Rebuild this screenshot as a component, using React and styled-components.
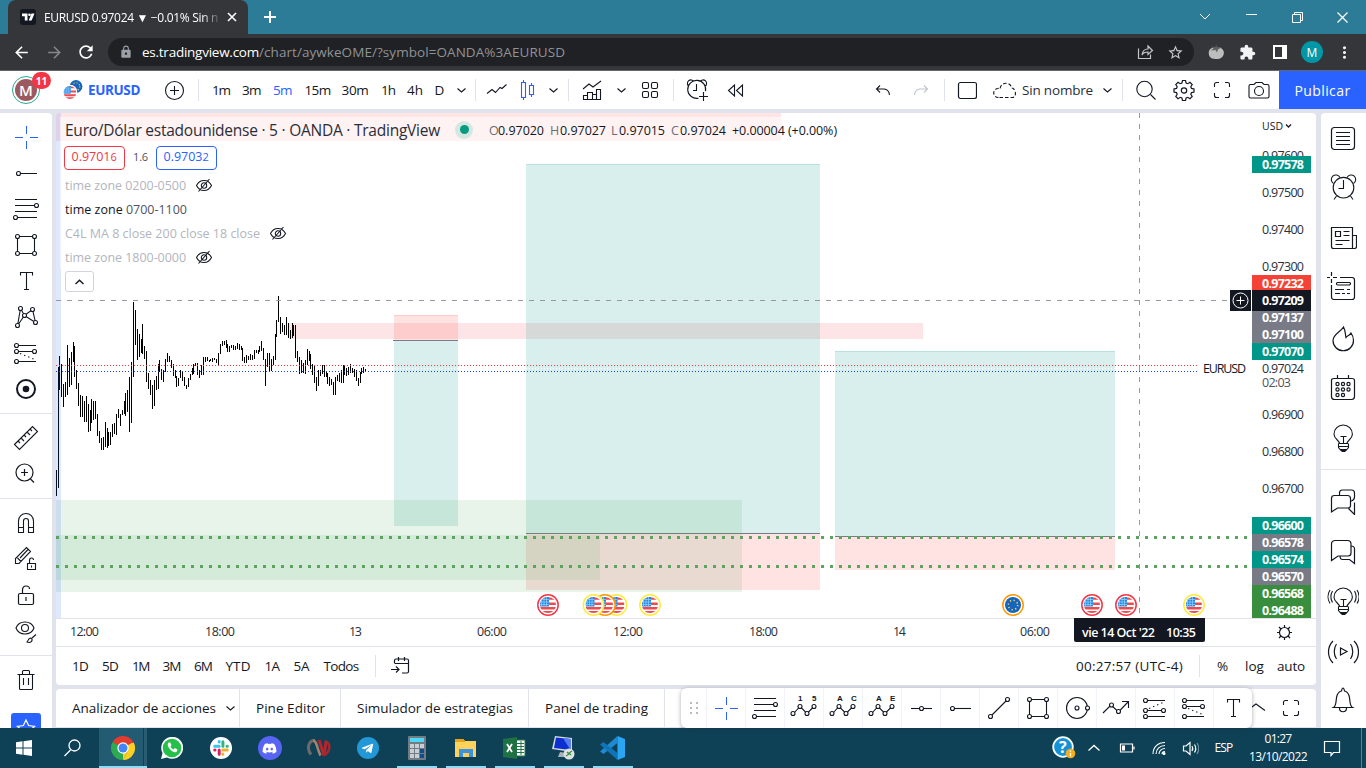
import React, { useLayoutEffect, useRef } from "react";
import styled, { createGlobalStyle } from "styled-components";
import { MdArrowBack, MdArrowForward, MdRefresh, MdLock, MdStarBorder, MdExtension, MdMoreVert } from "react-icons/md";
import { FaDiscord, FaTelegramPlane } from "react-icons/fa";

const UI = `"Trebuchet MS", "Open Sans", "Noto Sans", sans-serif`;
const INK = "#131722";
const BLUE = "#2962ff";
const LINE = "#e0e3eb";

const Global = createGlobalStyle`
  * { box-sizing: border-box; }
  body { margin: 0; overflow: hidden; font-family: ${UI}; color: ${INK}; }
  svg { display: block; flex: none; }
`;

/* ---------- text fitted to a width through its tracking ---------- */
const FitText = styled.span`
  display: inline-block;
  white-space: pre;
  flex: none;
  font-size: ${(p) => p.$size || 14}px;
  font-weight: ${(p) => p.$weight || 400};
  color: ${(p) => p.$color || INK};
  line-height: 1.3;
  padding-top: ${(p) => p.$drop}px;
`;
function Fit({ w, size, weight, color, drop = 2, children }) {
  const ref = useRef(null);
  useLayoutEffect(() => {
    const el = ref.current;
    el.style.letterSpacing = "0px";
    const natural = el.getBoundingClientRect().width;
    el.style.letterSpacing = `${(w - natural) / el.textContent.length}px`;
  }, [w, children]);
  return <FitText ref={ref} $size={size} $weight={weight} $color={color} $drop={drop}>{children}</FitText>;
}

/* ---------- page frame ---------- */
const Screen = styled.div`
  width: 1366px; height: 768px; overflow: hidden;
  display: flex; flex-direction: column; background: ${LINE};
`;
const Cell = styled.div`
  width: ${(p) => p.$w}px; height: 100%; flex: none;
  display: flex; align-items: center; justify-content: ${(p) => p.$align || "center"};
  padding-left: ${(p) => p.$pl || 0}px;
`;
const Grow = styled.div`flex: 1;`;

/* ---------- browser ---------- */
const TabStrip = styled.div`
  height: 34px; flex: none; background: #2c7b97; display: flex; align-items: stretch; padding-left: 8px;
`;
const Tab = styled.div`
  width: 240px; background: #35363a; border-radius: 8px 8px 0 0; display: flex; align-items: center;
  padding-left: 12px; gap: 8px;
`;
const TabTitle = styled.div`
  width: 174px; color: #fff; white-space: nowrap; padding-bottom: 2px;
  mask-image: linear-gradient(90deg, #000 158px, transparent 178px);
`;
const NavBar = styled.div`
  height: 37px; flex: none; background: #35363a; border-bottom: 1px solid #66656b;
  display: flex; align-items: center;
`;
const Omnibox = styled.div`
  width: 1086px; height: 28px; border-radius: 14px; background: #202124; display: flex; align-items: center;
  padding: 0 10px;
`;
const Profile = styled.div`
  width: 22px; height: 22px; border-radius: 50%; background: #0097a7; color: #fff; font-size: 12px;
  display: flex; align-items: center; justify-content: center;
`;

/* ---------- trading header ---------- */
const Header = styled.div`
  height: 38px; flex: none; background: #fff; display: flex; align-items: center;
`;
const VLine = styled.div`width: 1px; height: 22px; background: ${LINE}; flex: none;`;
const Avatar = styled.div`
  position: relative; width: 28px; height: 28px; border-radius: 50%; border: 1px solid #22ab94; padding: 2px;
`;
const AvatarFace = styled.div`
  width: 22px; height: 22px; border-radius: 50%; background: #9c5a60; color: #fff; font-size: 15px; font-weight: 600;
  display: flex; align-items: center; justify-content: center;
`;
const Badge = styled.div`
  position: absolute; left: 19px; top: -5px; width: 19px; height: 17px; border-radius: 9px; background: #f23645; color: #fff;
  font-size: 10px; font-weight: 700; display: flex; align-items: center; justify-content: center;
`;
const Publish = styled.div`
  width: 87px; height: 38px; background: ${BLUE}; display: flex; align-items: center; justify-content: center;
`;

/* ---------- workspace ---------- */
const Work = styled.div`height: 615px; flex: none; margin-top: 4px; display: flex;`;
const LeftBar = styled.div`
  width: 52px; background: #fff; border-radius: 0 4px 0 0; padding-top: 6px; overflow: hidden;
  display: flex; flex-direction: column; align-items: center;
`;
const Tool = styled.div`width: 52px; height: 36px; flex: none; display: flex; align-items: center; justify-content: center;`;
const HLine = styled.div`width: 100%; height: 1px; background: ${LINE}; margin: 6px 0; flex: none;`;
const StarButton = styled.div`
  width: 30px; height: 30px; margin-top: 15px; border-radius: 3px; background: ${BLUE}; flex: none;
  display: flex; align-items: center; justify-content: center;
`;
const Middle = styled.div`width: 1260px; margin-left: 4px; display: flex; flex-direction: column;`;
const ChartCard = styled.div`
  position: relative; height: 572px; background: #fff; border-radius: 4px; overflow: hidden;
  display: flex; flex-direction: column;
`;
const RangeBar = styled.div`
  height: 39px; border-top: 1px solid ${LINE}; display: flex; align-items: center; margin-top: -1px; flex: none;
`;
const BottomTabs = styled.div`
  position: relative; height: 39px; margin-top: 4px; background: #fff; border-radius: 4px 4px 0 0;
  border-bottom: 1px solid ${LINE}; display: flex; align-items: center;
`;
const BottomTab = styled.div`
  width: ${(p) => p.$w}px; height: 38px; border-right: 1px solid ${LINE}; display: flex; align-items: center;
  padding-left: 16px; gap: 9px;
`;
const Favorites = styled.div`
  position: absolute; left: 625px; top: -1px; width: 571px; height: 40px; background: #fff; border-radius: 6px;
  box-shadow: 0 1px 4px rgba(40, 44, 60, 0.4); display: flex;
`;
const FavCell = styled.div`
  width: ${(p) => p.$w || 39}px; height: 40px; display: flex; align-items: center; justify-content: center;
  border-left: ${(p) => (p.$first ? 0 : 1)}px solid #f0f3fa;
`;
const RightBar = styled.div`
  width: 45px; margin-left: 5px; background: #fff; border-radius: 4px 0 0 0; display: flex; flex-direction: column; align-items: center;
`;
const SideTool = styled.div`
  width: 45px; height: 50px; flex: none; padding-right: 1px; display: flex; align-items: center; justify-content: center;
`;

/* ---------- legend over the chart ---------- */
const Legend = styled.div`
  position: absolute; left: 4px; top: 4px; display: flex; flex-direction: column; align-items: flex-start;
`;
const LegendRow = styled.div`
  height: ${(p) => p.$h || 24}px; padding: 0 6px 0 5px; display: flex; align-items: center; gap: ${(p) => p.$gap || 0}px;
  background: rgba(255, 255, 255, 0.5);
`;
const Quote = styled.div`
  width: 61px; height: 24px; border: 1px solid ${(p) => p.$c}; border-radius: 4px; background: #fff; color: ${(p) => p.$c};
  display: flex; align-items: center; justify-content: center; margin-left: ${(p) => p.$ml || 0}px;
  margin-right: ${(p) => p.$mr || 0}px;
`;
const Pip = styled.span`display: inline-flex; padding-bottom: 3px;`;
const Collapse = styled.div`
  width: 29px; height: 21px; margin: 2px 0 0 5px; border: 1px solid #d1d4dc; border-radius: 3px; background: #fff;
  display: flex; align-items: center; justify-content: center;
`;
const Status = styled.div`
  width: 18px; height: 18px; border-radius: 50%; background: #d3e8e2; display: flex; align-items: center; justify-content: center;
  margin: 0 16px 0 15px;
  &::after { content: ""; width: 9px; height: 9px; border-radius: 50%; background: #089981; }
`;

/* ---------- taskbar ---------- */
const Taskbar = styled.div`height: 40px; flex: none; background: #0e4156; display: flex; align-items: center;`;
const TaskApp = styled.div`
  width: 49px; height: 40px; flex: none; display: flex; align-items: center; justify-content: center;
  background: ${(p) => (p.$active ? "linear-gradient(90deg,#0e4156 1px,#225b72 1px,#225b72 45px,#0e4156 45px,#0e4156 46px,#2a5b70 46px)" : "none")};
  position: relative;
  &::after {
    content: ""; position: absolute; left: ${(p) => (p.$active ? 1 : 5)}px; right: ${(p) => (p.$active ? 0 : 4)}px; bottom: 0;
    height: ${(p) => (p.$open ? 2 : 0)}px; background: #8cdcf5;
  }
`;
const Clock = styled.div`
  width: 76px; display: flex; flex-direction: column; align-items: center; gap: 2px;
`;
const EdgeLine = styled.div`width: 1px; height: 40px; background: #5b7f8e; margin-right: 4px;`;

/* ---------- icons ---------- */
function Ico({ d, dots = [], s = 28, c = INK, sw = 1, fill = "none", children }) {
  return (
    <svg width={s} height={s} viewBox={`0 0 ${s} ${s}`} fill={fill} stroke={c} strokeWidth={sw}>
      {d && <path d={d} />}
      {dots.map(([x, y], i) => <circle key={i} cx={x} cy={y} r="2" fill="#fff" strokeWidth="1.1" />)}
      {children}
    </svg>
  );
}
const Chevron = ({ up }) => (
  <svg width="11" height="8" viewBox="0 0 11 8" fill="none" stroke={INK} strokeWidth={up ? 1.4 : 1.1}>
    <path d={up ? "M1.5 6L5.5 2.2 9.5 6" : "M1.5 2.5L5.5 6 9.5 2.5"} />
  </svg>
);
const Cross = () => <Ico c={BLUE} d="M14.5 3v8M14.5 18v8M3 14.5h8M18 14.5h8" />;
const Ray = () => <Ico d="M9 14.5h16" sw={1.1} dots={[[6.5, 14.5]]} />;
const Fib = () => <Ico d="M3 4.5h22M3 10.5h20M3 16.5h22M5 22.5h20" sw={1.1} dots={[[24.5, 10.5], [3.5, 22.5]]} />;
const RectI = () => <Ico d="M5.5 5.5h17v17h-17z" sw={1.1} dots={[[5.5, 5.5], [22.5, 5.5], [5.5, 22.5], [22.5, 22.5]]} />;
const TextI = () => <Ico d="M8.500 8.500V5.500h12v3M14.500 5.500v17M12 22.500h5" sw={1.1} />;
const Pattern = () => <Ico d="M5.500 22.500L8.500 5.500l4 7 8-6 3 13-11-7z" sw={1.1} dots={[[5.5, 22.5], [8.5, 5.5], [12.5, 12.5], [20.5, 6.5], [23.5, 19.5]]} />;
const Forecast = ({ flip }) =>
  flip ? (
    <Ico d="M5 6.500h19M5 16.500h17M5 22.500h19" sw={1.1} dots={[[4.5, 6.5], [4.5, 16.5], [22.5, 16.5], [4.5, 22.5]]}>
      <path d="M8 14.500L22 8.500" strokeDasharray="1.4 3" />
    </Ico>
  ) : (
    <Ico d="M5 6.500h19M5 12.500h17M5 22.500h19" sw={1.1} dots={[[4.5, 6.5], [4.5, 12.5], [22.5, 12.5], [4.5, 22.5]]}>
      <path d="M8 14.500L24 21" strokeDasharray="1.4 3" />
    </Ico>
  );
const Bulb = ({ waves }) => (
  <Ico s={32} sw={1.1} d="M12.500 21.500c0-3-5.500-4.500-5.500-9.300a9.200 9.200 0 0 1 18.400 0c0 4.800-5.400 6.300-5.400 9.300M11.500 21.500h9.500M11.500 24.500h9.500M13 27.500h7M14.500 29.500h4M16.500 21v-7M13.500 14.500h6M11.500 21.500v4l2.500 3h5l2.500-3v-4">
    {waves && <path d="M5.500 6c-2 3.500-2 8 0 11.500M3 5c-2.600 4-2.600 9.500 0 13.500M27.500 6c2 3.500 2 8 0 11.500M30 5c2.600 4 2.600 9.500 0 13.500" />}
  </Ico>
);
const HiddenEye = () => (
  <Ico s={18} sw={1.05} d="M1.500 9.500C3 6.500 6 4.500 9 4.500s6 2 7.500 5c-1.500 3-4.500 5-7.500 5s-6-2-7.500-5zM3.500 15.500L14.500 3">
    <circle cx="9" cy="9.500" r="2.700" />
  </Ico>
);
const Wave = ({ a, b }) => (
  <Ico s={28} sw={1.1} d="M3.500 19.500L10 12.500l7 7 7-7" dots={[[3, 19.5], [10, 12.5], [17, 19.5], [24, 12.5]]}>
    <g fill={INK} stroke="none" fontFamily="Liberation Sans, sans-serif" fontSize="8" fontWeight="700">
      <text x="8" y="7">{a}</text><text x="22" y="7">{b}</text>
    </g>
  </Ico>
);
const Corners = () => <Ico sw={1.1} d="M6.500 11V8.500q0-2 2-2H11M17 6.500h2.500q2 0 2 2V11M21.500 17v2.500q0 2-2 2H17M11 21.500H8.500q-2 0-2-2V17" />;
const AlarmClock = () => (
  <Ico s={32} sw={1.1} d="M16.500 8v8.500h-5M6.500 11.500a4.600 4.600 0 1 1 6.500-6M20 5.500a4.600 4.600 0 1 1 6.500 6M9.500 24L7 27.500M23.500 24l2.500 3.500">
    <circle cx="16.500" cy="15.700" r="10.300" />
  </Ico>
);
const AlarmAdd = () => (
  <Ico s={24} sw={1.1} d="M11.500 6v6.500H8M4 8.500a3.600 3.600 0 1 1 5-5M15 3.500a3.600 3.600 0 1 1 5 5M18.500 14v9M14 18.500h9M13.500 20.200a9 9 0 1 1 7-7" />
);

/* circular US / EU marks; `ring` gives the importance colour */
function FlagShape({ eu }) {
  if (eu)
    return (
      <g>
        <circle r="8" fill="#1565c0" />
        <circle r="4.700" fill="none" stroke="#ffd54f" strokeWidth="1.500" strokeDasharray="1.300 2.390" />
      </g>
    );
  return (
    <g clipPath="url(#disc)">
      <rect x="-8" y="-8" width="16" height="16" fill="#fff" />
      <path d="M-8-6.500H8M-8-1.200H8M-8 3.300H8M-8 7.300H8" stroke="#ef4b4f" strokeWidth="2.500" />
      <rect x="-8" y="-8" width="9" height="9.500" fill="#1e88e5" />
      <path d="M-6.500-8V1M-4-8V1M-1.500-8V1M-8-5.500H1M-8-3H1M-8-.500H1" stroke="#9fd0f8" strokeWidth=".7" />
    </g>
  );
}
const EventMark = ({ x, ring, eu }) => (
  <g transform={`translate(${x} 492)`}>
    <circle r="10.200" fill="#fff" stroke={ring} strokeWidth="1.500" />
    <FlagShape eu={eu} />
  </g>
);

/* ---------- chart ---------- */
const BARS_A = "169,540,618 175,232,594 179,197,300 185,222,320 191,282,350 197,275,320 203,165,315 209,205,292 215,186,285 220,156,215 223,168,262 230,240,296 236,280,350 242,315,380 248,318,380 254,332,395 260,318,395 266,342,426 272,360,423 275,327,400 281,333,390 287,333,387 293,372,437 299,423,458 305,444,480 311,440,480 317,396,470 323,414,474 326,426,468 332,426,464 338,402,440 344,398,432 350,372,434 356,357,385 362,372,407 368,360,375 374,332,372 377,309,378 383,300,365 389,261,426 395,216,398 401,36,261 407,60,165 413,116,210 419,131,200 425,147,190 428,102,192 434,168,207 440,182,276 446,248,297 452,270,315 458,285,356 464,270,348 470,258,300 476,222,297 479,210,245 485,237,270 491,240,275 497,207,246 503,189,216 509,198,216 515,210,234 521,222,258 527,240,264 530,258,290 536,264,288 542,240,264 548,246,273 554,261,288 560,285,297 566,264,290 572,252,270 578,234,255 581,222,252 587,219,228 593,219,255 599,240,263 605,225,255 611,201,255 617,201,216 623,201,213 629,210,216 632,207,213 638,204,216 644,204,210 650,207,219 656,189,225 662,162,192 668,153,168 674,153,165 680,150,174 683,162,186 689,168,186";
const BARS_B = "4,195,204 10,195,210 16,198,210 22,189,207 28,192,210 34,198,210 37,204,243 43,231,249 49,225,249 55,228,240 61,222,240 67,225,240 73,210,237 79,210,219 85,210,222 88,198,216 94,183,213 100,204,240 106,237,318 112,219,261 118,219,273 124,237,273 130,228,255 136,162,240 139,120,171 145,48,126 151,111,162 157,129,156 163,135,165 169,111,165 175,129,174 181,150,177 187,129,174 190,135,168 196,135,234 202,213,246 208,231,282 214,240,279 220,249,279 226,240,282 232,207,255 238,213,243 241,222,267 247,252,285 253,258,309 259,291,333 265,270,318 271,270,288 277,255,282 283,255,291 289,276,291 292,279,312 298,291,318 304,297,315 310,306,345 316,291,345 322,285,303 328,279,306 334,270,309 340,255,309 343,258,285 349,264,288 355,261,285 361,252,279 367,264,279 373,267,291 379,270,303 385,294,318 391,276,309 394,264,282 400,261,279 406,267,273";
const toBars = (src, ox, oy) =>
  src.split(" ").map((t) => {
    const [x, a, b] = t.split(",").map(Number);
    return [Math.floor(x / 3) + ox, Math.round(a / 3) + oy, Math.round((b - a) / 3)];
  });
const BARS = [...toBars(BARS_A, -56, 177), ...toBars(BARS_B, 174, 167)];

const TEAL = "rgba(0,150,136,.15)";
const RED = "rgba(255,60,60,.15)";
const PRICES = [["0.97600", 43], ["0.97500", 80], ["0.97400", 117], ["0.97300", 154], ["0.97024", 256], ["0.96900", 302], ["0.96800", 339], ["0.96700", 376]];
const TAGS = [
  ["0.97578", 43, "#009688"], ["0.97232", 162, "#f44336"], ["0.97137", 196, "#787b86"], ["0.97100", 213, "#787b86"], ["0.97070", 230, "#009688"],
  ["0.97209", 179, INK], ["0.96600", 404, "#009688"], ["0.96578", 421, "#787b86"], ["0.96574", 438, "#009688"],
  ["0.96570", 455, "#787b86"], ["0.96568", 472, "#388e3c"], ["0.96488", 489, "#388e3c"],
];
const TIMES = [["12:00", 14, 29], ["18:00", 149, 30], ["13", 293, 13], ["06:00", 421, 30], ["12:00", 557, 30], ["18:00", 693, 29], ["14", 837, 13], ["06:00", 964, 30]];

function Chart() {
  return (
    <svg width="1260" height="534" viewBox="0 0 1260 534" fontFamily={UI} fontSize="12.500" fill={INK}>
      <defs><clipPath id="disc"><circle r="8" /></clipPath></defs>
      <g shapeRendering="crispEdges">
        <rect x="0" y="0" width="725" height="28" fill={RED} opacity=".9" />
        <rect x="233" y="210" width="634" height="16" fill="rgba(242,54,69,.13)" />
        {BARS.map(([x, y, h], i) => <rect key={i} x={x} y={y} width="1" height={h} fill="#000" />)}
        <rect x="338" y="202" width="64" height="25" fill={RED} />
        <rect x="338" y="202" width="64" height="1" fill="rgba(244,67,54,.15)" />
        <rect x="338" y="227" width="64" height="186" fill={TEAL} />
        <rect x="337" y="227" width="65" height="1" fill="#787b86" />
        <rect x="470" y="51" width="294" height="369" fill={TEAL} />
        <rect x="470" y="51" width="294" height="1" fill={TEAL} />
        <rect x="470" y="421" width="294" height="56" fill={RED} />
        <rect x="470" y="420" width="294" height="1" fill="#787b86" />
        <rect x="779" y="238" width="280" height="185" fill={TEAL} />
        <rect x="779" y="238" width="280" height="1" fill={TEAL} />
        <rect x="779" y="424" width="280" height="33" fill={RED} />
        <rect x="779" y="423" width="280" height="1" fill="#787b86" />
        <rect x="0" y="387" width="686" height="92" fill="rgba(63,163,80,.12)" />
        <rect x="0" y="422" width="544" height="45" fill="rgba(52,154,64,.1)" />
        <rect x="0" y="0" width="5" height="505" fill="rgba(41,98,255,.15)" />
        <path d="M0 252.500H1142" stroke="#f23645" strokeDasharray="1 2" />
        <path d="M338 255.500H402M470 255.500H764M779 255.500H1059" stroke="#fff" strokeDasharray="1 2" />
        <path d="M0 258.500H1142" stroke="#1848cc" strokeDasharray="1 2" />
        <path d="M0 424.500H1194M0 453.500H1194" stroke="#5aa45d" strokeWidth="3" strokeDasharray="3 6" />
        <path d="M0 187.500H1174M1083.500 0V505" stroke="#9598a1" strokeDasharray="5 6" />
        <path d="M0 505.500H1260" stroke={LINE} />
      </g>
      <EventMark x={492} ring="#f23645" />
      <EventMark x={560.5} ring="#ffeb3b" />
      <EventMark x={549} ring="#ff9800" />
      <EventMark x={537.5} ring="#ffeb3b" />
      <EventMark x={594} ring="#ffeb3b" />
      <EventMark x={957} ring="#ff9800" eu />
      <EventMark x={1036} ring="#f23645" />
      <EventMark x={1070} ring="#f23645" />
      <EventMark x={1138} ring="#ffeb3b" />
      {PRICES.map(([t, y]) => <text key={t} x="1206" y={y + 4} textLength="42" fill="#2a2e39">{t}</text>)}
      <text x="1206" y="274" textLength="29" fill="#50535e">02:03</text>
      <text x="1147" y="260" textLength="43">EURUSD</text>
      {TAGS.map(([t, y, c]) => (
        <g key={t}>
          <rect x="1196" y={t === "0.97209" ? 177 : y} width="59" height={t === "0.97209" ? 21 : y === 489 ? 16 : 17} fill={c} />
          <text x="1206" y={y + 13} textLength="42" fill="#fff" fontWeight="700">{t}</text>
        </g>
      ))}
      <rect x="1174" y="177" width="21" height="21" fill={INK} />
      <g fill="none" stroke="#fff"><circle cx="1184.500" cy="187.500" r="7.500" /><path d="M1180.500 187.500h8M1184.500 183.500v8" /></g>
      <text x="1206" y="17" fontSize="11" textLength="21" lengthAdjust="spacingAndGlyphs">USD</text>
      <path d="M1230 11.500l2.500 2.500 2.500-2.500" fill="none" stroke={INK} strokeWidth="1.300" />
      {TIMES.map(([t, x, w]) => <text key={x} x={x} y="523" textLength={w} fill="#2a2e39">{t}</text>)}
      <path d="M1018 505h131v22q0 2-2 2h-127q-2 0-2-2z" />
      <text x="1026" y="524" fill="#fff" fontWeight="600" textLength="73">vie 14 Oct '22</text>
      <text x="1110" y="524" fill="#fff" fontWeight="600" textLength="30">10:35</text>
      <g fill="none" stroke={INK} strokeWidth="1.200"><circle cx="1228.500" cy="519.500" r="5" />
        <path d="M1228.500 512v2.500M1228.500 524.500v2.500M1221 519.500h2.500M1233.500 519.500h2.500M1223 514l2 2M1232 523l2 2M1234 514l-2 2M1225 523l-2 2" /></g>
    </svg>
  );
}

const OHLC = [["O", "0.97020", 9, 52], ["H", "0.97027", 10, 51], ["L", "0.97015", 8, 52], ["C", "0.97024", 9, 52]];
function ChartLegend() {
  const off = "#b2b5be";
  return (
    <Legend>
      <LegendRow $h={25}>
        <Fit w={375} size={15.5} color="#2a2e39">Euro/Dólar estadounidense · 5 · OANDA · TradingView</Fit>
        <Status />
        {OHLC.map(([k, v, kw, cw]) => (
          <React.Fragment key={k}>
            <Fit w={kw} size={12.5} color="#6a6d78" drop={4}>{k}</Fit>
            <Cell $w={cw} $align="flex-start"><Fit w={46} size={12.5} drop={4}>{v}</Fit></Cell>
          </React.Fragment>
        ))}
        <Fit w={105} size={12.5} drop={4}>+0.00004 (+0.00%)</Fit>
      </LegendRow>
      <LegendRow $h={31}>
        <Quote $c="#f23645" $ml={-1} $mr={8}><Fit w={39} size={12.5} color="#f23645" drop={0}>0.9701</Fit><Pip><Fit w={7} size={11} color="#f23645">6</Fit></Pip></Quote>
        <Fit w={15} size={11} color="#50535e" drop={0}>1.6</Fit>
        <Quote $c={BLUE} $ml={8}><Fit w={39} size={12.5} color={BLUE} drop={0}>0.9703</Fit><Pip><Fit w={7} size={11} color={BLUE}>2</Fit></Pip></Quote>
      </LegendRow>
      <LegendRow $gap={9}><Fit w={121} size={12.5} weight={500} color={off}>time zone 0200-0500</Fit><HiddenEye /></LegendRow>
      <LegendRow><Fit w={61} size={12.5}>time zone </Fit><Fit w={61} size={12.5} color="#50535e">0700-1100</Fit></LegendRow>
      <LegendRow $gap={9}><Fit w={195} size={12.5} weight={500} color={off}>C4L MA 8 close 200 close 18 close</Fit><HiddenEye /></LegendRow>
      <LegendRow $gap={9}><Fit w={121} size={12.5} weight={500} color={off}>time zone 1800-0000</Fit><HiddenEye /></LegendRow>
      <Collapse><Chevron up /></Collapse>
    </Legend>
  );
}

/* ---------- sections ---------- */
function Browser() {
  return (
    <>
      <TabStrip>
        <Tab>
          <svg width="16" height="16" viewBox="0 0 16 16"><rect width="16" height="16" rx="3" fill="#131722" /><path d="M2 4.500h5.500v7H4.800V7.200H2zM11.500 4.500H14.500L11.600 11.500H8.700z" fill="#fff" /><circle cx="9.500" cy="5.800" r="1.300" fill="#fff" /></svg>
          <TabTitle><Fit w={174} size={12} color="#fff" drop={0}>EURUSD 0.97024 ▼ −0.01% Sin n</Fit></TabTitle>
          <Ico s={16} c="#fff" sw={1.6} d="M2 4l8 8M10 4l-8 8" />
        </Tab>
        <Cell $w={44}><Ico s={14} c="#fff" sw={2} d="M7 1v12M1 7h12" /></Cell>
        <Grow />
        <Cell $w={46}><Ico s={12} c="#fff" d="M1 3l5 5 5-5" /></Cell>
        <Cell $w={46}><Ico s={11} c="#fff" d="M0 2.500h11" /></Cell>
        <Cell $w={46}><Ico s={11} c="#fff" d="M.500 2.500h8v8h-8zM2.500 2.500v-2h8v8h-2" /></Cell>
        <Cell $w={45}><Ico s={11} c="#fff" sw={1.2} d="M.500.500l10 10M10.500.500l-10 10" /></Cell>
        <Cell $w={1} />
      </TabStrip>
      <NavBar>
        <Cell $w={5} />
        <Cell $w={33}><MdArrowBack size={19} color="#fff" /></Cell>
        <Cell $w={32}><MdArrowForward size={19} color="#85868a" /></Cell>
        <Cell $w={32}><MdRefresh size={20} color="#fff" /></Cell>
        <Cell $w={6} />
        <Omnibox>
          <Cell $w={24} $align="flex-start" $pl={1}><MdLock size={14} color="#9aa0a6" /></Cell>
          <Fit w={117} size={13.5} color="#fff">es.tradingview.com</Fit>
          <Fit w={306} size={13.5} color="#8f9397">/chart/aywkeOME/?symbol=OANDA%3AEURUSD</Fit>
          <Grow />
          <Cell $w={32} $align="flex-start" $pl={3}><Ico s={18} c="#c4c7c9" sw={1.2} d="M1.500 5.500v10h12v-4M5 12c.500-4 3-6 6-6V3l4.500 4.500-4.500 4V9c-3 0-5 1-6 3z" /></Cell>
          <Cell $w={18} $align="flex-end"><MdStarBorder size={17} color="#c4c7c9" /></Cell>
        </Omnibox>
        <Cell $w={43}>
          <svg width="16" height="16" viewBox="0 0 16 16"><path d="M8 4c8-2 9 5 7 8-1.500 2.500-4 3-7 3s-6-.500-7-4C0 7 2 2.500 8 4z" fill="#bdbdbd" /><path d="M3 2l4 1.500L8.500.500 9 3.500l5-.500-4 2.500-1 3L7.500 6 3 6.500 5.500 4.500z" fill="#5f6062" /></svg>
        </Cell>
        <Cell $w={21}><MdExtension size={17} color="#f1f3f4" /></Cell>
        <Cell $w={43}><svg width="14" height="14"><path fillRule="evenodd" fill="#fff" d="M0 0h14v14H0zM2 2v10h7V2z" /></svg></Cell>
        <Cell $w={22}><Profile>M</Profile></Cell>
        <Cell $w={42}><MdMoreVert size={19} color="#f1f3f4" /></Cell>
      </NavBar>
    </>
  );
}

function TradingHeader() {
  const frames = [["1m", 18, 30], ["3m", 19, 31], ["5m", 19, 31], ["15m", 26, 39], ["30m", 27, 36], ["1h", 14, 30], ["4h", 16, 24], ["D", 9, 24]];
  return (
    <Header>
      <Cell $w={52}><Avatar><AvatarFace>M</AvatarFace><Badge>11</Badge></Avatar></Cell>
      <Cell $w={36} $align="flex-start" $pl={11}>
        <svg width="20" height="20" viewBox="0 0 20 20">
          <g transform="translate(13 6.500) scale(.8)"><FlagShape eu /></g>
          <circle cx="7" cy="12" r="7.300" fill="#fff" /><g transform="translate(7 12.500) scale(.8)"><FlagShape /></g>
        </svg>
      </Cell>
      <Fit w={52} size={13.5} weight={700} color={BLUE}>EURUSD</Fit>
      <Cell $w={58} $align="flex-start" $pl={24}><Ico s={21} sw={1.1} d="M6 10.500h9M10.500 6v9"><circle cx="10.5" cy="10.5" r="9" /></Ico></Cell>
      <VLine />
      <Cell $w={7} />
      {frames.map(([t, w, cw]) => <Cell key={t} $w={cw}><Fit w={w} size={13.5} color={t === "5m" ? BLUE : INK}>{t}</Fit></Cell>)}
      <Cell $w={21}><Chevron /></Cell>
      <Cell $w={3} />
      <VLine />
      <Cell $w={41} $pl={1}><Ico s={22} sw={1.1} d="M1 14.500l5-4 3.500 3 4.500-5 2 1 4.500-4" /></Cell>
      <Cell $w={20}><Ico s={20} c={BLUE} sw={1.1} d="M4.500 2.500h4v15h-4zM6.500 0v2.500M6.500 17.500V20M12.500 5.500h4v9h-4zM14.500 3v2.500M14.500 14.500v2.500" /></Cell>
      <Cell $w={31} $pl={2}><Chevron /></Cell>
      <VLine />
      <Cell $w={46}><Ico s={20} sw={1.1} d="M1 9l6-5 4 3 8-6M1.500 19.500v-4h4v4M5.500 15.500v-3h5v7M10.500 14.500h4v5M14.500 14.500v-5h4v10M1 19.500h18" /></Cell>
      <Cell $w={12}><Chevron /></Cell>
      <Cell $w={46}>
        <Ico s={18} sw={1.1}>{[[1.5, 1.5], [10.5, 1.5], [1.5, 10.5], [10.5, 10.5]].map(([x, y]) => <rect key={x + "-" + y} x={x} y={y} width="6" height="6" rx="1.5" />)}</Ico>
      </Cell>
      <VLine />
      <Cell $w={46}><AlarmAdd /></Cell>
      <Cell $w={31}><Ico s={17} sw={1.1} d="M7.500 3v11L1.500 8.500zM15.500 3v11L9.500 8.500z" /></Cell>
      <Grow />
      <Cell $w={38} $align="flex-start" $pl={4}><Ico s={18} sw={1.1} d="M6 4.500L2.500 8 6 11.500M3 8h7q5 .500 5.500 6" /></Cell>
      <Cell $w={36} $align="flex-start" $pl={4}><Ico s={18} c="#c1c4cd" sw={1.1} d="M12 4.500L15.500 8 12 11.500M15 8H8q-5 .500-5.500 6" /></Cell>
      <VLine />
      <Cell $w={45} $align="flex-start" $pl={12}><Ico s={20} sw={1.2}><rect x="1.5" y="2.500" width="18" height="16" rx="2" /></Ico></Cell>
      <Cell $w={32} $align="flex-start" $pl={2}><Ico s={26} sw={1.1}><path strokeDasharray="3.500 2" d="M6.500 20.500a4 4 0 0 1-.500-9q1-.500 2 .500c1-8 11-7 11.500-1 4-.500 6 9 1 9.500z" /></Ico></Cell>
      <Fit w={71} size={13.5} color="#2a2e39">Sin nombre</Fit>
      <Cell $w={29} $align="flex-start" $pl={9}><Chevron /></Cell>
      <VLine />
      <Cell $w={43} $align="flex-start" $pl={12}><Ico s={22} sw={1.1} d="M15.500 15.500l5 5"><circle cx="9.5" cy="10" r="7.700" /></Ico></Cell>
      <Cell $w={36} $align="flex-start" $pl={7}>
        <Ico s={22} sw={1.2} d="M9.500 1.500h3l.600 2.500 1.700.700 2.200-1.400 2.200 2.200-1.400 2.200.700 1.700 2.500.600v3l-2.500.600-.700 1.700 1.400 2.200-2.200 2.200-2.200-1.400-1.700.700-.600 2.500h-3l-.600-2.500-1.700-.700-2.200 1.400-2.200-2.200 1.400-2.200-.700-1.700L1 13v-3l2.500-.600.700-1.700L2.800 5.500 5 3.300l2.200 1.400 1.700-.700z"><circle cx="11" cy="11.5" r="2.700" /></Ico>
      </Cell>
      <Cell $w={39} $align="flex-start" $pl={6}><Corners /></Cell>
      <Cell $w={38} $align="flex-start" $pl={7}><Ico s={22} sw={1.1} d="M2.500 5.500H6L8 3.500h6l2 2h3.500q1.500 0 1.500 1.500v10.500q0 1.500-1.500 1.500h-17Q1 19 1 17.500V7q0-1.500 1.500-1.500z"><circle cx="11" cy="12" r="4.500" /></Ico></Cell>
      <Publish><Fit w={56} size={14} color="#fff">Publicar</Fit></Publish>
    </Header>
  );
}

function LeftTools() {
  const items = [
    <Cross />, <Ray />, <Fib />, <RectI />, <TextI />, <Pattern />, <Forecast />,
    <Ico sw={2}><circle cx="14" cy="14" r="9" /><circle cx="14" cy="14" r="3.300" fill={INK} stroke="none" /></Ico>,
    null,
    <Ico d="M2.500 20.500l18-18 5 5-18 18zM6 17l2 2M9 14l3 3M12 11l2 2M15 8l3 3M18 5l2 2" sw={1.1} />,
    <Ico d="M12.500 9v7M9 12.500h7M18.500 19l3.500 3.500" sw={1.2}><circle cx="12.5" cy="12.5" r="8.500" /></Ico>,
    null,
    <Ico d="M6.500 23.500V12a7.500 7.500 0 0 1 15 0v11.500h-5V12a2.500 2.500 0 0 0-5 0v11.500zM6.500 18.500h5M16.500 18.500h5" sw={1.1} />,
    <Ico d="M3.500 18.500v-5l11-11 4 4-11.500 12zM5.500 13l3.500 3.500M8 13l8-8.500M15.500 18.500h8v6h-8zM17.500 18.500v-3q0-2.500 2-2.500t2 2M19.500 20.500v2" sw={1.1} />,
    <Ico d="M8 12.500h12q1.500 0 1.500 1.500v8q0 1.500-1.500 1.500H8q-1.500 0-1.500-1.500v-8q0-1.500 1.500-1.500zM10.500 12.500V9q0-4 3.500-4t3.500 3M14 16v4" sw={1.2} />,
    <Ico d="M4 11c3-8 15-8 18 0-3 8-15 8-18 0zM14.500 25c2 0 1-3.500 4-4 2 0 2.500 4-1 4.500zM20 21l4-3.500" sw={1.1}><circle cx="13" cy="11" r="3.500" /></Ico>,
    null,
    <Ico d="M5.500 8.500h17M7.500 8.500v14q0 1 1 1h11q1 0 1-1v-14M10.500 8.500v-3q0-1 1-1h5q1 0 1 1v3M11.500 12v7M16.500 12v7" sw={1.1} />,
  ];
  return (
    <LeftBar>
      {items.map((it, i) => (it ? <Tool key={i}>{it}</Tool> : <HLine key={i} />))}
      <StarButton><Ico s={22} c="#fff" sw={1.2} d="M11 3l2.600 5.500 6 .800-4.400 4 1.100 6L11 16.500 5.700 19.300l1.100-6-4.400-4 6-.800z" /></StarButton>
    </LeftBar>
  );
}

function RightTools() {
  const items = [
    <Ico s={28} sw={1.2} d="M7 8.500h14M7 12.500h14M7 16.500h14M7 20.500h14"><rect x="2.500" y="3.500" width="23" height="22" rx="3" /></Ico>,
    <AlarmClock />,
    <Ico s={28} sw={1.2} d="M2.500 3.500h21v21h-19q-2 0-2-2zM23.500 11.500h4v11q0 2-2 2h-2M6.500 7.500h5v5h-5zM14.500 7.500h6M14.500 11.500h6M6.500 16.500h14M6.500 20.500h7" />,
    <Ico s={32} sw={1.2} d="M4.500 0v4M4.500 7v4M0 5.500h3M6 5.500h4M13 5.500h12q2.500 0 2.500 2.500v17q0 2.500-2.500 2.500H7q-2.500 0-2.500-2.500V13M9.500 11.500q0-1 1-1h12q1 0 1 1t-1 1.500h-12q-1 0-1-1.500zM8 17.500h9M20 17.500h3M8 21.500h5M15 21.500h3M20 21.500h3" />,
    <Ico s={28} sw={1.2} d="M14.500 3c-3 5-10.500 7.500-10.500 13.500a10 10 0 0 0 20.500 0c0-4-1-5.500-2.500-7.500-1.500 3-4 2.500-5 4.500-1-3 0-6-2.500-10.500z" />,
    <Ico s={28} sw={1.2} d="M8.500 1v4M19.500 1v4M5 4.500h18q2.500 0 2.500 2v16q0 3-3 3h-17q-3 0-3-3v-16q0-2 2.500-2z">{[[8.5, 10], [14, 10], [19.5, 10], [8.5, 15.5], [14, 15.5], [19.5, 15.5], [8.5, 21], [14, 21]].map(([x, y]) => <circle key={`${x}-${y}`} cx={x} cy={y} r="1.600" />)}</Ico>,
    <Bulb />,
    null,
    <Ico s={28} sw={1.2} d="M5.500 8.500h13q3 0 3 3v7q0 2.500-2.500 2.500h-10.500l-6 4v-13.500q0-3 3-3zM10.500 8.500V6q0-3 3-3h9q3 0 3 3v4q0 3-3 4h-1M25.500 15.500v12l-6-6" />,
    <Ico s={28} sw={1.2} d="M6.500 3.500h12q3.500 0 3.500 3.500v9q0 3-3 3h-10l-6.500 4.500V7q0-3.500 4-3.500zM22 9q3.500 0 3.500 3v14.500l-5-4h-7q-2.500 0-2.500-3.500" />,
    <Bulb waves />,
    <Ico s={32} sw={1.2} d="M13.500 13v7l6.500-3.500zM9.500 9c-3 4-3 11 0 15M6 6c-6 6-6 16 0 22M23.500 9c3 4 3 11 0 15M27 6c6 6 6 16 0 22" />,
    <Ico s={28} sw={1.2} d="M4.500 20.500c3.500-2 2-8 3.500-12q1.500-4 4.500-4.500.500-3 1.500-3t1.500 3q3 .500 4.500 4.500c1.500 4 0 10 3.500 12zM3.500 20.500h21M10.500 21c0 5 7 5 7 0" />,
  ];
  return <RightBar>{items.map((it, i) => (it ? <SideTool key={i}>{it}</SideTool> : <HLine key={i} />))}</RightBar>;
}

function RangeControls() {
  const r = [["1D", 16, 30], ["5D", 16, 30], ["1M", 17, 31], ["3M", 18, 31], ["6M", 18, 32], ["YTD", 25, 38], ["1A", 15, 30], ["5A", 16, 29], ["Todos", 35, 50]];
  return (
    <RangeBar>
      <Cell $w={9} />
      {r.map(([t, w, cw]) => <Cell key={t} $w={cw}><Fit w={w} size={13.5}>{t}</Fit></Cell>)}
      <Cell $w={9} />
      <VLine />
      <Cell $w={48}><Ico s={20} sw={1.2} d="M4.500 7V4.500q0-1.500 1.500-1.500h11q1.500 0 1.500 1.500v11q0 1.500-1.500 1.500H12M4.500 7.500h14M8.500 1v4M14.500 1v4M1 13.500h8M6 10.500l3 3-3 3" /></Cell>
      <Grow />
      <Fit w={107} size={13.5}>00:27:57 (UTC-4)</Fit>
      <Cell $w={16} />
      <VLine />
      <Cell $w={45} $pl={2}><Fit w={13} size={13.5}>%</Fit></Cell>
      <Cell $w={19}><Fit w={19} size={13.5}>log</Fit></Cell>
      <Cell $w={52} $pl={2}><Fit w={28} size={13.5}>auto</Fit></Cell>
    </RangeBar>
  );
}

function Bottom() {
  const favs = [
    <Cross />, <Fib />, <Wave a="1" b="5" />, <Wave a="A" b="C" />, <Wave a="A" b="E" />,
    <Ico d="M4 14.500h21" sw={1.1} dots={[[14.5, 14.5]]} />, <Ray />,
    <Ico d="M6 22L22 6" sw={1.1} dots={[[5.5, 22.5], [22.5, 5.5]]} />, <RectI />,
    <Ico sw={1.1}><circle cx="14" cy="14" r="10.500" /><circle cx="14" cy="14" r="2" /><circle cx="24.500" cy="14" r="2" fill="#fff" /></Ico>,
    <Ico d="M1 19l8-8 7.500 7L26 8M20 7.500h6.500V14" sw={1.1} dots={[[9.5, 11], [16.5, 17.5]]} />,
    <Forecast flip />, <Forecast />, <TextI />,
  ];
  return (
    <BottomTabs>
      <BottomTab $w={184}><Fit w={144} size={13.5}>Analizador de acciones</Fit><Chevron /></BottomTab>
      <BottomTab $w={101}><Fit w={69} size={13.5}>Pine Editor</Fit></BottomTab>
      <BottomTab $w={188}><Fit w={156} size={13.5}>Simulador de estrategias</Fit></BottomTab>
      <BottomTab $w={136}><Fit w={103} size={13.5}>Panel de trading</Fit></BottomTab>
      <Grow />
      <Cell $w={28}><Ico s={20} sw={1.1} d="M1 12.500L10 6l9 6.500" /></Cell>
      <Cell $w={7} />
      <Cell $w={28}><Corners /></Cell>
      <Cell $w={11} />
      <Favorites>
        <FavCell $w={25} $first><Ico s={12} c="none" fill="#b8bbc4"><path d="M2 0h2v2H2zM8 0h2v2H8zM2 5h2v2H2zM8 5h2v2H8zM2 10h2v2H2zM8 10h2v2H8z" /></Ico></FavCell>
        {favs.map((f, i) => <FavCell key={i}>{f}</FavCell>)}
      </Favorites>
    </BottomTabs>
  );
}

const Bubble = styled.div`
  width: ${(p) => p.$s || 22}px; height: ${(p) => p.$s || 22}px; border-radius: 50%; background: ${(p) => p.$c};
  display: flex; align-items: center; justify-content: center;
`;
function TaskbarRow() {
  return (
    <Taskbar>
      <Cell $w={48}><svg width="16" height="16" fill="#fff"><path d="M0 2.200l6.500-.900v6.200H0zM7.500 1.200L16 0v7.500H7.500zM0 8.500h6.500v6.200L0 13.800zM7.500 8.500H16V16l-8.500-1.200z" /></svg></Cell>
      <Cell $w={50} $align="flex-start" $pl={15}><Ico s={18} c="#fff" sw={1.3} d="M7.500 11L1.500 17"><circle cx="11.500" cy="6.500" r="5.500" /></Ico></Cell>
      <TaskApp $active $open>
        <svg width="24" height="24" viewBox="0 0 24 24"><path d="M12 12L1.600 6A12 12 0 0 1 22.400 6z" fill="#e33b2e" /><path d="M12 12L1.600 6A12 12 0 0 0 12 24z" fill="#2da94f" /><path d="M12 12l10.400-6A12 12 0 0 1 12 24l5-9z" fill="#fdd023" /><path d="M12 12l5 3-5 9z" fill="#fdd023" /><path d="M12 6.500h10.700" stroke="#e33b2e" /><circle cx="12" cy="12" r="5.700" fill="#fff" /><circle cx="12" cy="12" r="4.500" fill="#4286f5" /></svg>
      </TaskApp>
      <TaskApp>
        <svg width="22" height="22" viewBox="0 0 22 22"><path d="M0 22l1.500-6A11 11 0 1 1 6 20.500z" fill="#fff" /><circle cx="11" cy="11" r="9.300" fill="#25c04a" /><path d="M7.500 5.500c-3 3 3.500 11 8 9.500l1-2.500-2.700-1.400-1.300 1.400c-1.500-.500-2.500-1.700-3-3l1-1.200L9.300 5.500z" fill="#fff" /></svg>
      </TaskApp>
      <TaskApp>
        <Bubble $c="#fff"><svg width="16" height="16" viewBox="0 0 16 16" fill="none" strokeWidth="3" strokeLinecap="round"><path d="M6.200 1.600V2M1.700 6.200h4.500" stroke="#36c5f0" /><path d="M9.900 1.800v4.400M14.300 6.200h-.3" stroke="#2eb67d" /><path d="M9.900 9.900h4.400M9.900 14.200v-.2" stroke="#ecb22e" /><path d="M6.200 9.900v4.400M1.700 9.900H2" stroke="#e01e5a" /></svg></Bubble>
      </TaskApp>
      <TaskApp><Bubble $c="#5865f2" $s={24}><FaDiscord size={15} color="#fff" /></Bubble></TaskApp>
      <TaskApp>
        <svg width="26" height="20" viewBox="0 0 26 20">
          <path d="M9 2.500C3 2 0 10 5 16.500" fill="none" stroke="#6f6a68" strokeWidth="3" />
          <path d="M7 2.500c4 0 4 9 7.500 15" fill="none" stroke="#a08472" strokeWidth="2.500" />
          <path d="M13 2l5 15.500M18.500 15L20 3" fill="none" stroke="#b3262c" strokeWidth="3" />
          <path d="M19 3c6 2 6 11-1.500 14.500" fill="none" stroke="#a3272c" strokeWidth="2.500" />
        </svg>
      </TaskApp>
      <TaskApp><Bubble $c="#2299d6"><FaTelegramPlane size={13} color="#fff" /></Bubble></TaskApp>
      <TaskApp $open>
        <svg width="18" height="24" viewBox="0 0 18 24"><rect width="18" height="24" rx="1" fill="#737c84" /><rect x="2" y="2" width="14" height="4" fill="#4fd8f5" />{[0, 1, 2].map((r) => [0, 1, 2].map((c) => <rect key={`${r}${c}`} x={2 + c * 5} y={8 + r * 5} width="4" height="4" fill={c === 2 && r > 0 ? "#104e8b" : "#c9ced2"} />))}</svg>
      </TaskApp>
      <TaskApp $open>
        <svg width="22" height="20" viewBox="0 0 22 20"><path d="M0 1h8l2 2h11v16H0z" fill="#ffd35b" /><path d="M0 1h8l2 2v1H0z" fill="#e8a317" /><path d="M4 19v-8h14v8h-4v-4H8v4z" fill="#3b94dd" /></svg>
      </TaskApp>
      <TaskApp $open>
        <svg width="23" height="22" viewBox="0 0 23 22"><rect x="13" y="3" width="9" height="16" fill="#fff" stroke="#1f7244" /><path d="M14 6.500h7M14 9.500h7M14 12.500h7M14 15.500h7M18 4v14" stroke="#1f7244" /><path d="M0 2l14-2v22L0 20z" fill="#1f7244" /><path d="M4 7l5 8M9 7l-5 8" stroke="#fff" strokeWidth="1.800" /></svg>
      </TaskApp>
      <TaskApp $open>
        <svg width="23" height="24" viewBox="0 0 23 24"><path d="M8 16l6 1v4H6z" fill="#aab2b8" /><path d="M3 0l17 2v14L0 13z" fill="#d7dbe0" /><path d="M4 1.500L18.500 3v11L2 12z" fill="#0d2fcf" /><path d="M11 2l7.500 1v11z" fill="#527cf0" /><circle cx="17" cy="18" r="5.500" fill="#dfe2e0" /><path d="M14 20l3-2-2-2M20 15l-3 2 2 2" fill="none" stroke="#3b9148" strokeWidth="1.300" /></svg>
      </TaskApp>
      <TaskApp $open>
        <svg width="25" height="24" viewBox="0 0 25 24"><path d="M17.500 0v7L3.500 18 0 15.500z" fill="#1f8ad2" /><path d="M0 8.500L3.500 6l14 11v7z" fill="#1074b8" /><path d="M17.500 0L25 3v18l-7.500 3z" fill="#2aa5f2" /></svg>
      </TaskApp>
      <Grow />
      <Cell $w={28} $pl={2}>
        <svg width="24" height="24" viewBox="0 0 24 24"><circle cx="11" cy="11" r="9.800" fill="#1592d5" stroke="#fff" strokeWidth="1.800" /><text x="7" y="17" fontSize="16" fontWeight="700" fontFamily={UI} fill="#fff">?</text><circle cx="18.500" cy="17.500" r="4.800" fill="#f2ae1c" /><path d="M18.500 14.500v1.300M18.500 17v3.500" stroke="#fff" strokeWidth="1.300" /></svg>
      </Cell>
      <Cell $w={33} $pl={1}><Ico s={14} c="#fff" sw={1.3} d="M1.500 9.500L7 4.500l5.500 5" /></Cell>
      <Cell $w={33}><Ico s={16} c="#fff" sw={1.2} d="M1.500 4h12v8h-12zM15 6.500v3"><rect x="3" y="5.500" width="3" height="5" fill="#fff" stroke="none" /></Ico></Cell>
      <Cell $w={31} $pl={1}><Ico s={14} c="#fff" sw={1.1} d="M1 13C1 6 6 1.500 13 1.500M4 13c0-5 4-8.500 9-8.500M7 13c0-3 2.500-5.500 6-5.500M10 13c0-1.500 1-2.500 3-2.500"><circle cx="12" cy="12.500" r="1" fill="#fff" /></Ico></Cell>
      <Cell $w={31} $pl={1}><Ico s={17} c="#fff" sw={1.2} d="M1.500 6v5H4l4 3.500v-12L4 6zM10 6q1.500 2.500 0 5M12.500 4.500q2.500 4 0 8"><path d="M15 3q3.500 5.500 0 11" stroke="#6f93a2" /></Ico></Cell>
      <Cell $w={35} $pl={2}><Fit w={18} size={12} color="#fff" drop={0}>ESP</Fit></Cell>
      <Clock><Fit w={27} size={12} color="#fff" drop={0}>01:27</Fit><Fit w={58} size={12} color="#fff" drop={0}>13/10/2022</Fit></Clock>
      <Cell $w={34} $align="flex-start" $pl={7}><Ico s={18} c="#fff" sw={1.2} d="M1.500 2.500h15v11h-6L8 16.500v-3H1.500z" /></Cell>
      <Cell $w={11} />
      <EdgeLine />
    </Taskbar>
  );
}

export default function App() {
  return (
    <>
      <Global />
      <Screen>
        <Browser />
        <TradingHeader />
        <Work>
          <LeftTools />
          <Middle>
            <ChartCard>
              <Chart />
              <ChartLegend />
              <RangeControls />
            </ChartCard>
            <Bottom />
          </Middle>
          <RightTools />
        </Work>
        <TaskbarRow />
      </Screen>
    </>
  );
}
